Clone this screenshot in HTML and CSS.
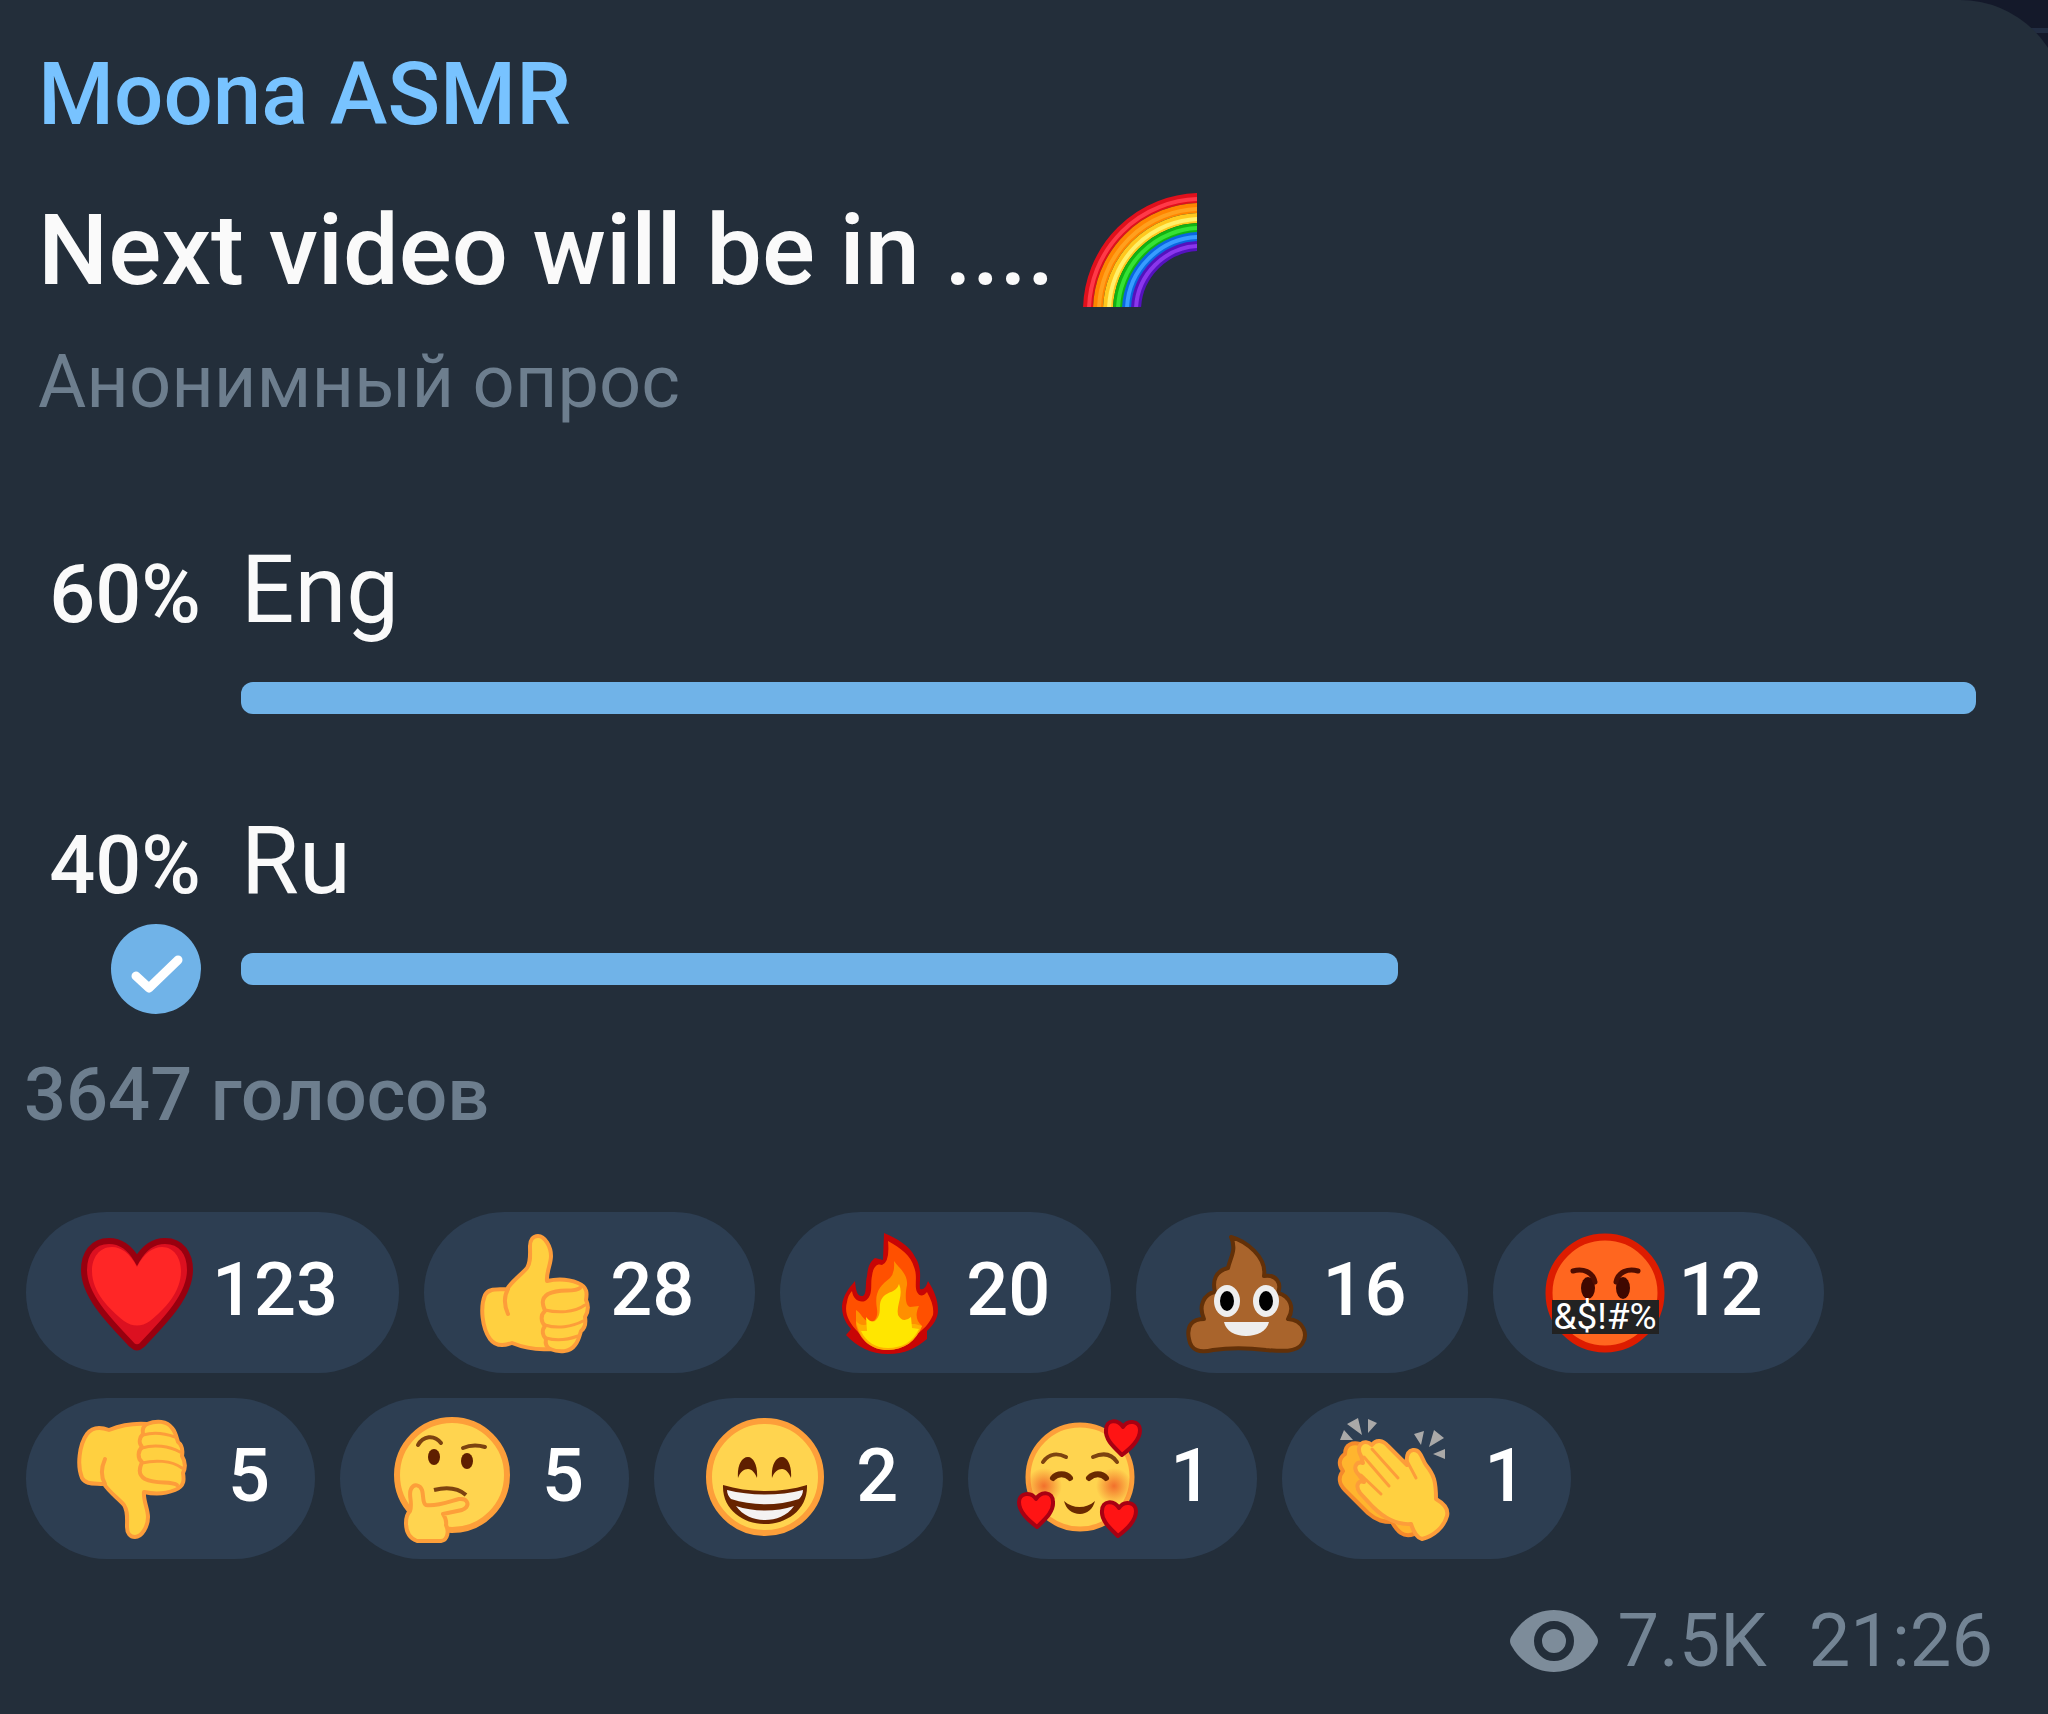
FILE: index.html
```html
<!DOCTYPE html>
<html lang="ru">
  <head>
    <meta charset="UTF-8" />
    <meta name="viewport" content="width=device-width, initial-scale=1.0" />
    <title>Moona ASMR</title>
    <link rel="stylesheet" href="styles.css">
  </head>
  <body>
    <main class="message">
      <header class="message-header">
        <div class="author">Moona ASMR</div>
        <h1 class="question">
          Next video will be in ....
          <svg class="rainbow" viewBox="0 0 114 114" role="img" aria-label="rainbow">
            <g fill="none" stroke-width="10">
              <circle cx="118" cy="118" r="113" stroke="#e0101c" />
              <circle cx="118" cy="118" r="103" stroke="#ff8400" />
              <circle cx="118" cy="118" r="93" stroke="#ffc81e" />
              <circle cx="118" cy="118" r="83" stroke="#12b312" />
              <circle cx="118" cy="118" r="74" stroke="#0a66e0" />
              <circle cx="118" cy="118" r="65" stroke="#5412bd" />
            </g>
            <g fill="none" stroke-width="4">
              <circle cx="118" cy="118" r="112" stroke="#ff3a48" />
              <circle cx="118" cy="118" r="102" stroke="#ffa01e" />
              <circle cx="118" cy="118" r="92" stroke="#fff06a" />
              <circle cx="118" cy="118" r="83" stroke="#35e235" />
              <circle cx="118" cy="118" r="74" stroke="#389cff" />
              <circle cx="118" cy="118" r="65" stroke="#8a36ec" />
            </g>
          </svg>
        </h1>
        <div class="poll-type">Анонимный опрос</div>
      </header>

      <section class="options">
        <div class="option">
          <div class="percent">60%</div>
          <div class="option-text">Eng</div>
          <div class="option-mark"></div>
          <div class="track">
            <div class="bar" style="width: 100%"></div>
          </div>
        </div>

        <div class="option">
          <div class="percent">40%</div>
          <div class="option-text">Ru</div>
          <div class="option-mark">
            <svg class="check" viewBox="0 0 90 90" role="img" aria-label="выбрано">
              <circle cx="45" cy="45" r="45" fill="#70b3e8" />
              <path d="M25 52 L38 64 L67 36" fill="none" stroke="#fff" stroke-width="9" stroke-linecap="round" stroke-linejoin="round" />
            </svg>
          </div>
          <div class="track">
            <div class="bar" style="width: 66.7%"></div>
          </div>
        </div>
      </section>

      <div class="votes">3647 голосов</div>

      <section class="reactions">
        <div class="reaction-row">
          <button class="reaction" type="button">
            <svg class="emoji" viewBox="0 0 120 120" aria-hidden="true">
              <path d="M59 27 C51 13 41 8 31 8 C14 8 6 21 6 37 C6 63 32 89 54 112 Q59 117 64 112 C86 89 112 63 112 37 C112 21 104 8 87 8 C77 8 67 13 59 27 Z" fill="#dc1020" stroke="#98000f" stroke-width="6" />
              <path d="M59 34 C52 20 43 14 34 14 C21 14 14 25 14 38 C14 59 31 76 46 88 Q59 97 72 88 C87 76 103 59 103 38 C103 25 96 14 84 14 C75 14 66 20 59 34 Z" fill="#ff2626" />
            </svg>
            <span class="count">123</span>
          </button>

          <button class="reaction" type="button">
            <svg class="emoji" viewBox="0 0 120 120" aria-hidden="true">
              <g id="thumb" fill="#ffd040" stroke="#fd9d3a" stroke-width="4" stroke-linejoin="round" stroke-linecap="round">
                <path d="M31 56 C37 47 45 42 51 35 C55 29 54 22 54 13 C54 7 57 3 62 3 C69 3 75 14 75 23 C75 31 70 40 71 48 C80 46 92 46 102 50 C112 54 111 61 110 67 C113 73 112 79 109 84 C110 90 109 95 105 98 C103 105 102 109 99 112 C94 119 84 120 74 116 C60 117 46 114 36 110 C28 113 20 114 14 106 C6 95 4 74 9 62 C13 55 21 57 31 56 Z" />
                <path d="M32 56 C28 63 28 72 32 81" fill="none" />
                <path d="M104 55 C98 60 84 55 72 61 C64 66 67 73 69 78 C64 82 65 89 69 93 C65 98 67 103 70 106 C69 111 70 114 74 116" fill="none" />
                <path d="M69 77 C81 80 98 80 109 72 M69 92 C81 96 96 94 107 88 M70 105 C80 108 91 107 102 103" fill="none" stroke-width="3" />
              </g>
            </svg>
            <span class="count">28</span>
          </button>

          <button class="reaction" type="button">
            <svg class="emoji" viewBox="0 0 120 120" aria-hidden="true">
              <path d="M52 0 C66 6 78 13 83 24 C91 36 87 47 88 56 Q93 58 96 48 C102 57 106 67 106 77 C106 85 102 91 95 98 L95 106 C84 115 73 121 56 121 C39 121 25 114 14 102 L19 96 C12 88 10 81 10 73 C11 62 17 55 23 48 C24 58 25 64 31 63 C35 61 33 50 35 43 C36 32 39 28 43 25 L51 27 Z" fill="#c80505" />
              <path d="M56 8 C69 15 79 23 82 34 C86 44 82 52 85 59 Q89 66 95 59 C100 68 102 75 101 82 C97 91 91 97 85 101 C68 113 43 112 27 100 C16 89 12 79 15 69 Q16 62 20 58 C21 66 27 70 33 68 C42 63 38 51 40 43 C41 34 45 30 50 32 Q58 29 56 8 Z" fill="#ff5000" />
              <path d="M62 28 C67 35 76 41 75 52 C73 61 73 73 78 74 L87 73 C83 81 84 88 90 93 C84 108 72 117 56 117 C39 117 28 107 24 92 L24 77 C29 80 31 87 37 89 C44 89 46 83 45 76 C42 59 48 53 58 45 Q63 40 62 28 Z" fill="#ff8f00" />
              <path d="M24 88 Q29 94 36 91 L83 91 L90 93 C84 108 72 117 56 117 C39 117 28 107 24 88 Z" fill="#ffb000" />
              <path d="M67 51 C72 62 64 72 66 82 Q71 91 79 84 L80 95 L87 96 C81 109 70 115 56 115 C44 115 34 109 29 98 L35 98 L34 84 Q42 94 47 82 C49 76 46 70 51 64 C56 58 64 60 67 51 Z" fill="#ffe600" />
            </svg>
            <span class="count">20</span>
          </button>

          <button class="reaction" type="button">
            <svg class="emoji" viewBox="0 0 120 120" aria-hidden="true">
              <path d="M43 4 C58 8 79 24 76 43 C88 41 94 50 90 60 C102 63 107 75 100 86 C115 87 121 101 114 111 C108 120 91 118 78 117 C55 114 38 115 25 117 C12 120 3 118 1 106 C-2 92 5 86 16 86 C10 73 16 61 27 59 C24 47 28 38 40 35 C42 25 49 17 43 4 Z" fill="#a9642c" stroke="#623008" stroke-width="4" stroke-linejoin="round" />
              <ellipse cx="39" cy="68" rx="13" ry="16" fill="#eee" />
              <ellipse cx="78" cy="68" rx="13" ry="16" fill="#eee" />
              <ellipse cx="39" cy="68" rx="7" ry="10" />
              <ellipse cx="78" cy="68" rx="7" ry="10" />
              <path d="M36 89 H81 C79 98 69 103 58 103 C47 103 38 98 36 89 Z" fill="#eee" />
            </svg>
            <span class="count">16</span>
          </button>

          <button class="reaction" type="button">
            <svg class="emoji" viewBox="0 0 120 120" aria-hidden="true">
              <circle cx="60" cy="60" r="56" fill="#ff661f" stroke="#dd1c00" stroke-width="7" />
              <ellipse cx="43" cy="55" rx="7" ry="11" fill="#3f0800" />
              <ellipse cx="78" cy="55" rx="7" ry="11" fill="#3f0800" />
              <path d="M28 38 C38 35 48 39 50 49 M93 38 C83 35 73 39 71 49" fill="none" stroke="#4f0d00" stroke-width="5" stroke-linecap="round" />
              <rect x="7" y="67" width="107" height="34" fill="#222" />
              <text class="censor" x="60" y="96" text-anchor="middle">&amp;$!#%</text>
            </svg>
            <span class="count">12</span>
          </button>
        </div>

        <div class="reaction-row">
          <button class="reaction short" type="button">
            <svg class="emoji" viewBox="0 0 120 120" aria-hidden="true">
              <use href="#thumb" transform="translate(-5 121) scale(1 -1)" />
            </svg>
            <span class="count">5</span>
          </button>

          <button class="reaction short" type="button">
            <svg class="emoji" viewBox="0 0 120 120" aria-hidden="true">
              <circle cx="60" cy="56" r="55" fill="#ffd44f" stroke="#fd9f3a" stroke-width="6" />
              <ellipse cx="42" cy="38" rx="6" ry="8" fill="#5f1f00" />
              <ellipse cx="75" cy="42" rx="6" ry="8" fill="#5f1f00" />
              <path d="M26 26 C31 17 42 15 49 24 M71 29 C78 26 86 26 93 28" fill="none" stroke="#7d4310" stroke-width="4" stroke-linecap="round" />
              <path d="M42 71 C54 68 66 69 74 76" fill="none" stroke="#7d4310" stroke-width="4" />
              <path d="M18 92 C21 84 16 76 19 70 C22 64 28 66 30 71 C32 77 30 84 34 86 C43 88 56 83 67 80 C76 79 79 87 70 91 L51 95 C53 98 55 101 54 106 C57 112 56 121 49 122 L25 122 C17 119 14 112 14 104 C14 99 15 95 18 92 Z" fill="#ffd44f" stroke="#fd9f3a" stroke-width="4" stroke-linejoin="round" />
            </svg>
            <span class="count">5</span>
          </button>

          <button class="reaction short" type="button">
            <svg class="emoji" viewBox="0 0 120 120" aria-hidden="true">
              <circle cx="59" cy="58" r="56" fill="#ffd44f" stroke="#fd9f3a" stroke-width="6" />
              <path d="M32 59 C31 48 35 38 42 38 C48 38 52 48 51 59 C49 54 46 50 42 50 C38 50 34 53 32 59 Z M66 59 C65 48 69 38 76 38 C82 38 86 48 85 59 C83 54 80 50 76 50 C72 50 68 53 66 59 Z" fill="#5f1f00" />
              <path d="M17 66 C43 74 75 74 101 66 C102 91 80 105 59 105 C38 105 16 91 17 66 Z" fill="#672300" />
              <path d="M21 71 C45 77 73 77 97 71 C97 75 95 78 93 80 C72 87 46 87 25 80 C23 78 21 75 21 71 Z" fill="#f4f2f2" />
              <path d="M30 87 C48 93 70 93 88 87 C81 97 70 101 59 101 C48 101 37 97 30 87 Z" fill="#f4f2f2" />
            </svg>
            <span class="count">2</span>
          </button>

          <button class="reaction short" type="button">
            <svg class="emoji" viewBox="0 0 120 120" aria-hidden="true">
              <defs>
                <radialGradient id="blush">
                  <stop offset="0" stop-color="#f2702c" />
                  <stop offset="1" stop-color="#f2702c" stop-opacity="0" />
                </radialGradient>
              </defs>
              <circle cx="60" cy="58" r="52" fill="#ffd44f" stroke="#fd9f3a" stroke-width="5" />
              <circle cx="24" cy="67" r="18" fill="url(#blush)" />
              <circle cx="94" cy="67" r="18" fill="url(#blush)" />
              <path d="M23 43 C29 34 38 34 46 38 M73 38 C82 34 91 34 97 43" fill="none" stroke="#7d4310" stroke-width="4" stroke-linecap="round" />
              <path d="M33 59 C37 54 46 54 50 59 M69 59 C74 54 82 54 86 59" fill="none" stroke="#6a2a00" stroke-width="6" stroke-linecap="round" />
              <path d="M44 82 C53 90 66 90 75 82 C73 90 67 95 60 95 C52 95 46 90 44 82 Z" fill="#6a2a00" />
              <g fill="#ff1414" stroke="#a80012" stroke-width="4" stroke-linejoin="round">
                <path id="heart" d="M103 8 C98 0 86 0 86 11 C85 21 95 29 102 36 C111 29 120 21 120 11 C120 2 108 0 103 8 Z" />
                <use href="#heart" transform="translate(119 72) scale(-1 1)" />
                <use href="#heart" transform="translate(-4 81)" />
              </g>
            </svg>
            <span class="count">1</span>
          </button>

          <button class="reaction short" type="button">
            <svg class="emoji" viewBox="0 0 120 120" aria-hidden="true">
              <path d="M6 21 L10 11 L19 21 Z M13 5 L24 -1 L28 16 Z M34 0 L43 4 L34 14 Z M80 15 L90 12 L87 26 Z M100 11 L110 19 L95 28 Z M99 35 L111 30 L111 40 Z" fill="#aaa9a8" />
              <path d="M26 25 C19 23 11 25 11 35 C5 39 4 46 9 52 C4 58 5 65 11 71 L34 94 C43 102 50 103 58 103 C63 112 69 119 80 115 L88 90 L45 35 Z" fill="#ffb52e" stroke="#f58a2b" stroke-width="4" stroke-linejoin="round" />
              <path d="M27 37 C21 26 30 19 38 26 C42 20 49 21 54 27 L73 46 C72 38 73 32 79 31 C87 30 88 41 92 46 C100 56 102 62 102 80 C109 84 115 89 113 97 C110 108 100 117 88 120 C83 119 79 111 77 105 C65 106 51 100 39 88 L26 74 C21 67 24 61 30 63 L25 56 C18 49 22 42 29 44 Z" fill="#ffd040" stroke="#fd9d3a" stroke-width="4" stroke-linejoin="round" />
              <path d="M38 30 L64 59 M30 38 L55 67 M27 56 L47 75 M73 42 L82 59" fill="none" stroke="#fd9d3a" stroke-width="3" stroke-linecap="round" />
            </svg>
            <span class="count">1</span>
          </button>
        </div>
      </section>

      <footer class="message-info">
        <svg class="eye" viewBox="0 0 88 62" role="img" aria-label="просмотры">
          <path d="M1 27 C11 9 27 0 44 0 C61 0 77 9 87 27 Q89 31 87 35 C77 53 61 62 44 62 C27 62 11 53 1 35 Q-1 31 1 27 Z" fill="#7d8c9a" />
          <circle cx="44" cy="31" r="16" fill="#7d8c9a" stroke="#232e3a" stroke-width="8" />
        </svg>
        <span class="views">7.5K</span>
        <time class="time">21:26</time>
      </footer>
    </main>
  </body>
</html>
```
FILE: styles.css
```css
* {
  box-sizing: border-box;
}
body {
  margin: 0;
  overflow-x: hidden;
  font-family: Roboto, sans-serif;
  color: #fafafa;
  background: linear-gradient(#14192a 28px, #222d42 28px, #222d42 33px, #14192a 33px);
}
.message {
  min-height: 100vh;
  margin-right: -17px;
  padding: 42px 72px 26px 24px;
  background-color: #232e3a;
  border-top-right-radius: 105px;
}
.message-header {
  padding-left: 14px;
}
.author {
  font-size: 87px;
  line-height: 104px;
  font-weight: 500;
  color: #78c3ff;
}
.question {
  display: flex;
  align-items: center;
  gap: 28px;
  margin: 44px 0 24px;
  font-size: 99px;
  line-height: 120px;
  font-weight: 500;
}
.rainbow {
  width: 114px;
  height: 114px;
}
.poll-type {
  font-size: 74px;
  line-height: 96px;
  color: #6d7e8e;
}
.options {
  display: flex;
  flex-direction: column;
  gap: 62px;
  margin-top: 104px;
  padding-right: 17px;
}
.option {
  display: grid;
  grid-template-columns: 177px 1fr;
  column-gap: 40px;
  row-gap: 2px;
  align-items: baseline;
}
.percent {
  font-size: 81px;
  line-height: 112px;
  font-weight: 500;
  text-align: right;
}
.option-text {
  font-size: 94px;
  line-height: 112px;
}
.option-mark {
  display: flex;
  justify-content: flex-end;
  height: 90px;
}
.check {
  width: 90px;
  height: 90px;
}
.track {
  align-self: center;
}
.bar {
  height: 32px;
  border-radius: 12px;
  background-color: #70b3e8;
}
.votes {
  margin-top: 33px;
  font-size: 74px;
  line-height: 96px;
  font-weight: 500;
  color: #6d7e8e;
}
.reactions {
  display: flex;
  flex-direction: column;
  gap: 25px;
  margin-top: 69px;
  padding-left: 2px;
}
.reaction-row {
  display: flex;
  flex-wrap: wrap;
  gap: 25px;
}
.reaction {
  display: flex;
  align-items: center;
  gap: 14px;
  height: 161px;
  padding: 0 61px 0 52px;
  border: 0;
  border-radius: 81px;
  font-family: inherit;
  font-size: 74px;
  line-height: 96px;
  font-weight: 500;
  color: #fff;
  background-color: #2d3e52;
  cursor: pointer;
}
.reaction.short {
  gap: 30px;
  padding-right: 45px;
}
.emoji {
  width: 120px;
  height: 120px;
  overflow: visible;
}
.count {
  padding-bottom: 6px;
}
.censor {
  font-size: 37px;
  font-weight: 400;
  fill: #fff;
}
.message-info {
  display: flex;
  align-items: center;
  justify-content: flex-end;
  margin-top: 34px;
  font-size: 74px;
  line-height: 96px;
  color: #738494;
}
.eye {
  width: 88px;
  height: 62px;
  margin-right: 20px;
}
.views {
  margin-right: 42px;
}
```
